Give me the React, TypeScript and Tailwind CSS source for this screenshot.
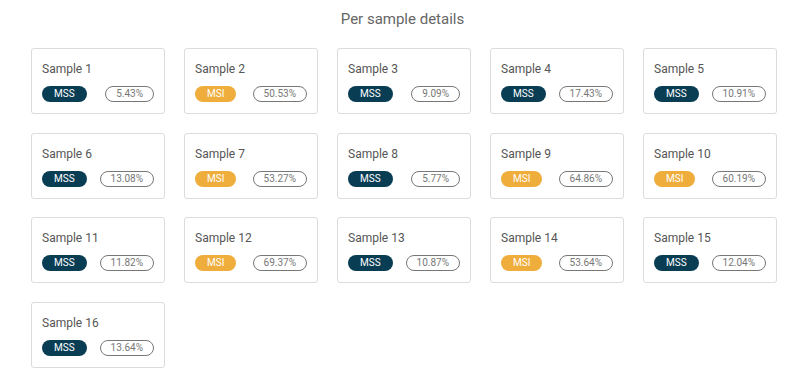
import React from 'react';

const SAMPLES = [
  { name: 'Sample 1', status: 'MSS', pct: '5.43%' },
  { name: 'Sample 2', status: 'MSI', pct: '50.53%' },
  { name: 'Sample 3', status: 'MSS', pct: '9.09%' },
  { name: 'Sample 4', status: 'MSS', pct: '17.43%' },
  { name: 'Sample 5', status: 'MSS', pct: '10.91%' },
  { name: 'Sample 6', status: 'MSS', pct: '13.08%' },
  { name: 'Sample 7', status: 'MSI', pct: '53.27%' },
  { name: 'Sample 8', status: 'MSS', pct: '5.77%' },
  { name: 'Sample 9', status: 'MSI', pct: '64.86%' },
  { name: 'Sample 10', status: 'MSI', pct: '60.19%' },
  { name: 'Sample 11', status: 'MSS', pct: '11.82%' },
  { name: 'Sample 12', status: 'MSI', pct: '69.37%' },
  { name: 'Sample 13', status: 'MSS', pct: '10.87%' },
  { name: 'Sample 14', status: 'MSI', pct: '53.64%' },
  { name: 'Sample 15', status: 'MSS', pct: '12.04%' },
  { name: 'Sample 16', status: 'MSS', pct: '13.64%' },
];

const App = () => {
  return (
    <div className="w-[805px] h-[375px] bg-white overflow-hidden" style={{ fontFamily: 'Roboto, "Liberation Sans", sans-serif' }}>
      <h2 className="pt-[8px] h-[48px] text-center text-[15px] leading-[22px] text-[#666]">Per sample details</h2>

      <div className="pl-[31px] grid grid-cols-[repeat(5,134px)] gap-x-[19px] gap-y-[18.5px]">
        {SAMPLES.map((s) => (
          <div key={s.name} className="h-[66px] border border-[#dcdcdc] rounded-[3px] px-[10px] pt-[12px]">
            <div className="text-[12px] leading-[16px] text-[#555]">{s.name}</div>
            <div className="mt-[9px] flex items-center justify-between">
              <span
                className={
                  s.status === 'MSS'
                    ? 'h-[16px] px-[12px] rounded-full bg-[#083d54] text-white text-[10px] leading-[16px]'
                    : 'h-[16px] px-[12px] rounded-full bg-[#efad3c] text-white text-[10px] leading-[16px]'
                }
              >
                {s.status}
              </span>
              <span className="h-[16px] px-[10px] rounded-full border border-[#777] text-[#777] text-[10px] leading-[14px]">
                {s.pct}
              </span>
            </div>
          </div>
        ))}
      </div>
    </div>
  );
};

export default App;
